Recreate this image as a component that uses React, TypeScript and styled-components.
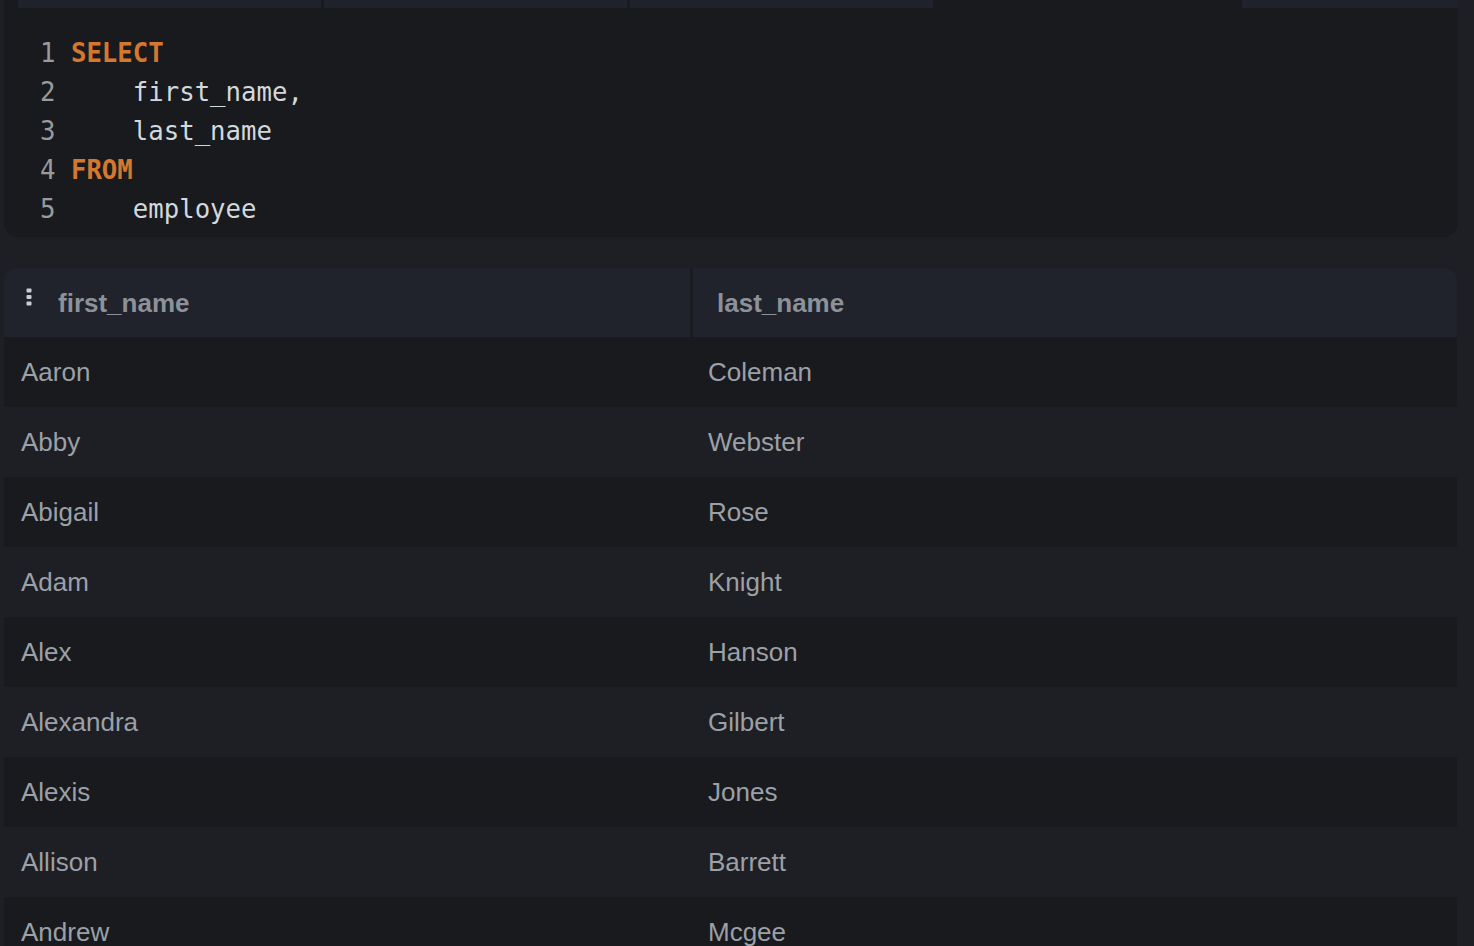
import React from 'react';
import styled, { createGlobalStyle } from 'styled-components';

const GlobalStyle = createGlobalStyle`
  html, body {
    margin: 0;
    padding: 0;
    background: #1e1f24;
  }
  body {
    font-family: "Liberation Sans", Arial, sans-serif;
    overflow: hidden;
  }
`;

const Page = styled.div`
  width: 1474px;
  height: 946px;
  padding-left: 4px;
  box-sizing: border-box;
  overflow: hidden;
`;

const Editor = styled.section`
  width: 1454px;
  background: #191a1e;
  border-radius: 0 0 14px 14px;
  padding-bottom: 8px;
`;

const TabBar = styled.div`
  display: flex;
  gap: 3px;
  height: 8px;
  padding-left: 14px;
`;

const Tab = styled.div<{ $active?: boolean }>`
  width: 303px;
  height: 8px;
  background: ${(p) => (p.$active ? '#191a1e' : '#1f222b')};
  &:last-child {
    flex: 1;
  }
`;

const Code = styled.pre`
  margin: 0;
  padding: 26px 0 0 36px;
  font-family: "DejaVu Sans Mono", Menlo, monospace;
  font-size: 25.7px;
  line-height: 39px;
  color: #d3d8dc;
`;

const LineNo = styled.span`
  color: #9a9b9d;
`;

const Keyword = styled.span`
  color: #d5782f;
  font-weight: bold;
`;

const Grid = styled.section`
  margin-top: 31px;
  width: 1453px;
`;

const HeaderRow = styled.div`
  display: flex;
  height: 69px;
  background: #20232b;
  border-radius: 12px 12px 0 0;
  overflow: hidden;
`;

const HeaderCell = styled.div<{ $first?: boolean }>`
  display: flex;
  align-items: center;
  box-sizing: border-box;
  width: ${(p) => (p.$first ? '689px' : 'auto')};
  flex: ${(p) => (p.$first ? 'none' : '1')};
  padding-left: ${(p) => (p.$first ? '22px' : '24px')};
  padding-top: 2px;
  border-right: ${(p) => (p.$first ? '3px solid #1b1c21' : 'none')};
  font-size: 26px;
  font-weight: bold;
  color: #8d9199;
`;

const MenuDots = styled.svg`
  width: 6px;
  height: 18px;
  margin-right: 26px;
  margin-top: -14px;
`;

const Row = styled.div<{ $odd: boolean }>`
  display: flex;
  height: 70px;
  align-items: center;
  background: ${(p) => (p.$odd ? '#191a1e' : '#1e1f24')};
  font-size: 26px;
  color: #9ca0a7;
`;

const Cell = styled.div<{ $first?: boolean }>`
  box-sizing: border-box;
  width: ${(p) => (p.$first ? '687px' : 'auto')};
  flex: ${(p) => (p.$first ? 'none' : '1')};
  padding-left: 17px;
  white-space: nowrap;
`;

const rows: [string, string][] = [
  ['Aaron', 'Coleman'],
  ['Abby', 'Webster'],
  ['Abigail', 'Rose'],
  ['Adam', 'Knight'],
  ['Alex', 'Hanson'],
  ['Alexandra', 'Gilbert'],
  ['Alexis', 'Jones'],
  ['Allison', 'Barrett'],
  ['Andrew', 'Mcgee'],
];

export default function App() {
  return (
    <Page>
      <GlobalStyle />
      <Editor>
        <TabBar>
          <Tab />
          <Tab />
          <Tab />
          <Tab $active />
          <Tab />
        </TabBar>
        <Code>
          <LineNo>1 </LineNo><Keyword>SELECT</Keyword>{'\n'}
          <LineNo>2 </LineNo>{'    first_name,'}{'\n'}
          <LineNo>3 </LineNo>{'    last_name'}{'\n'}
          <LineNo>4 </LineNo><Keyword>FROM</Keyword>{'\n'}
          <LineNo>5 </LineNo>{'    employee'}
        </Code>
      </Editor>
      <Grid>
        <HeaderRow>
          <HeaderCell $first>
            <MenuDots viewBox="0 0 6 18">
              <rect x="0.5" y="0.5" width="5" height="4" rx="1" fill="#c9ced4" />
              <rect x="0.5" y="7" width="5" height="4" rx="1" fill="#c9ced4" />
              <rect x="0.5" y="13.5" width="5" height="4" rx="1" fill="#c9ced4" />
            </MenuDots>
            first_name
          </HeaderCell>
          <HeaderCell>last_name</HeaderCell>
        </HeaderRow>
        {rows.map(([first, last], i) => (
          <Row key={first} $odd={i % 2 === 0}>
            <Cell $first>{first}</Cell>
            <Cell>{last}</Cell>
          </Row>
        ))}
      </Grid>
    </Page>
  );
}
